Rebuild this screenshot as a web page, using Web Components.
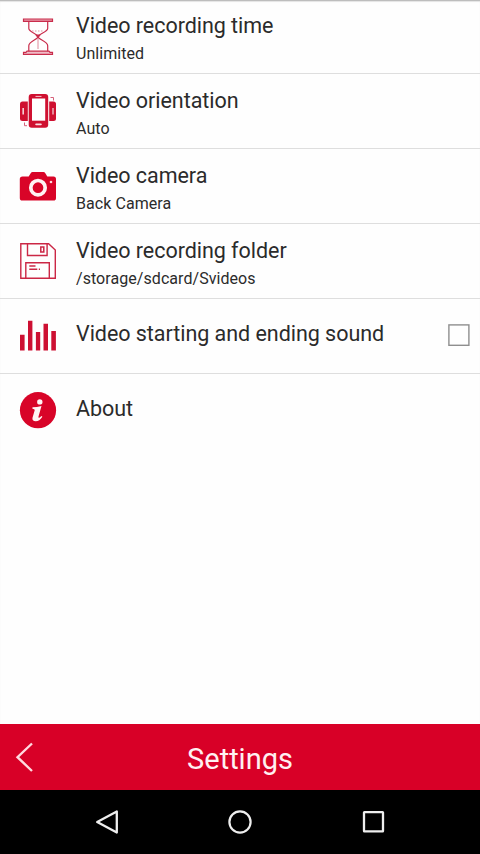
<!DOCTYPE html>
<html lang="en">
<head>
<meta charset="utf-8">
<title>Settings</title>
<style>
html, body { margin: 0; height: 100%; background: #fefefe; }
body { font-family: Roboto, "Liberation Sans", sans-serif; overflow: hidden; }
</style>
</head>
<body>
<settings-screen></settings-screen>
<script>
const ICONS = {
  hourglass: `<g fill="none" stroke="#c92c4b" stroke-width="1.2">
    <path fill="#e79aaa" d="M5.5 3h29v2.4h-29z"/><path fill="#f0bcc7" d="M9 35.2h22l1 1.2h2.5v2h-29v-2H8z"/>
    <path d="M10.8 5.4v7.2c0 3.4 9.2 5.6 9.2 8.1s-9.2 4.8-9.2 9v5.5M29.7 5.4v7.2c0 3.4-9.7 5.6-9.7 8.1s9.7 4.8 9.7 9v5.5"/>
    <path stroke="#e08a9c" stroke-dasharray="1.5 1.5" stroke-width=".9" d="M14 15h12"/><path stroke="#dc8092" stroke-width=".9" d="M20 22v11"/></g>
    <path fill="#c92c4b" d="M17 18.5h6l-3 4z"/>`,
  phones: `<g fill="#cf1030"><rect x="2" y="10.5" width="12" height="19.5" rx="2.5"/><rect x="27" y="10.5" width="11" height="19.5" rx="2.5"/></g>
    <path fill="#fefefe" d="M9.8 8h21.4v24H9.8z"/>
    <path fill="#fefefe" d="M4.5 17h1.3v6.5H4.5zM34.5 17h1v6.5h-1z"/>
    <rect x="10.7" y="3" width="19.5" height="33.7" rx="3" fill="#cf1030"/><path fill="#fefefe" d="M14 7.5h13.2v22.2H14z"/>
    <path stroke="#f7c5ce" stroke-width="1" d="M17.5 5.4h6"/><rect x="17.2" y="32.4" width="6.6" height="1.8" rx=".9" fill="#f9dce1"/>
    <path fill="none" stroke="#d6607a" d="M32.5 6.5h3v3M6.5 31.5v3.2h2.5"/>`,
  camera: `<path fill="#d90428" d="M4.5 10.5h6.2L13 6.8Q13.5 6 14.5 6h11q1 0 1.5.8l2.3 3.7h6.2Q38 10.5 38 13v19q0 2.6-2.6 2.6H4.4Q1.8 34.6 1.8 32V13q0-2.5 2.7-2.5z"/>
    <circle cx="20" cy="21.7" r="7.2" fill="#d90428" stroke="#fff2f3" stroke-width="3.7"/><circle cx="33" cy="16" r="1.3" fill="#ffd9df"/>`,
  floppy: `<g fill="none" stroke="#cb2745" stroke-width="1.4"><path d="M2.8 2.7h27.8l6.7 6.4v28.2H2.8z"/>
    <path d="M9.5 2.7v11.8h19.6V2.7M7.8 37.3V21.7h23.5v15.6"/><path stroke-width="1.5" d="M22.8 5.9h3v5h-3z"/>
    <path stroke-width="1.5" d="M11.3 25h6.2M11.3 28.3h8"/><path d="M20.8 28.3h1.2"/></g>`,
  bars: `<path fill="#cd1032" d="M2 18.8h4.6v15.6H2zM10 4.8h4.4v29.6H10zM17.9 16h4.3v18.4h-4.3zM25.5 7.8h4.5v26.6h-4.5zM33.3 15h4.6v19.4h-4.6z"/>`,
  info: `<circle cx="20" cy="19.2" r="18.1" fill="#d80428"/><circle cx="21.8" cy="10.9" r="2.7" fill="#fff5f5"/>
    <path fill="#fff5f5" d="M14.5 16.2q4.4-.2 9-1.3l-3 10.6q-.3 1.5.6 1.2.9-.4 2.2-1.8l1.1.8q-3 4.5-6.6 4.5-4 0-3.3-3.4l2.2-7.5q.3-1.6-2.3-1.6z"/>`
};

class SettingsIcon extends HTMLElement {
  connectedCallback() {
    this.attachShadow({ mode: 'open' }).innerHTML = `
      <style>:host{display:block;width:40px;height:40px;flex:none}svg{display:block}</style>
      <svg width="40" height="40" viewBox="0 0 40 40">${ICONS[this.getAttribute('name')]}</svg>`;
  }
}
customElements.define('settings-icon', SettingsIcon);

class SettingsRow extends HTMLElement {
  connectedCallback() {
    this.attachShadow({ mode: 'open' }).innerHTML = `
      <style>
        :host{display:flex;box-sizing:border-box;height:75px;padding:17px 10px 0 18px;border-bottom:1px solid #dedede;align-items:flex-start}
        :host(:last-of-type){border-bottom-color:transparent}
        .text{flex:1;margin:-4px 0 0 18px;color:#2b2b2b;white-space:nowrap}
        :host([single]) .text{margin-top:4px}
        .title{font-size:21.5px;line-height:28px;letter-spacing:-.04px}
        .detail{font-size:16px;line-height:20px;margin-top:4px;letter-spacing:.06px}
      </style>
      <settings-icon name="${this.getAttribute('icon')}"></settings-icon>
      <div class="text"><div class="title"><slot></slot></div><div class="detail"><slot name="detail"></slot></div></div>
      <slot name="control"></slot>`;
  }
}
customElements.define('settings-row', SettingsRow);

class CheckBox extends HTMLElement {
  connectedCallback() {
    this.attachShadow({ mode: 'open' }).innerHTML = `
      <style>:host{display:block;width:22px;height:22px;margin-top:8px;flex:none}svg{display:block}</style>
      <svg width="22" height="22" viewBox="0 0 22 22"><rect x=".9" y=".9" width="20" height="20.4" fill="none" stroke="#8e8e8e" stroke-width="1.4"/></svg>`;
  }
}
customElements.define('check-box', CheckBox);

class TitleBar extends HTMLElement {
  connectedCallback() {
    this.attachShadow({ mode: 'open' }).innerHTML = `
      <style>
        :host{display:grid;grid-template-columns:48px 1fr 48px;align-items:center;height:66px;background:#d80027;color:#fff0f1;text-align:center;font-size:29px;line-height:34px}
        svg{display:block}.label{padding-top:3px}
      </style>
      <svg width="48" height="66" viewBox="0 0 48 66"><path d="M32 19.5 17.5 33.2 32 47" fill="none" stroke="#ffd9df" stroke-width="2.4"/></svg>
      <div class="label"><slot></slot></div>`;
  }
}
customElements.define('title-bar', TitleBar);

class NavBar extends HTMLElement {
  connectedCallback() {
    this.attachShadow({ mode: 'open' }).innerHTML = `
      <style>:host{display:flex;justify-content:center;gap:93.5px;align-items:center;height:64px;background:#000}svg{display:block}</style>
      <svg width="40" height="40" viewBox="0 0 40 40"><path d="M10.2 20 29.8 9.5v21z" fill="none" stroke="#eee" stroke-width="2.3" stroke-linejoin="round"/></svg>
      <svg width="40" height="40" viewBox="0 0 40 40"><circle cx="20" cy="20" r="10.6" fill="none" stroke="#eee" stroke-width="2.2"/></svg>
      <svg width="40" height="40" viewBox="0 0 40 40"><rect x="10" y="10.2" width="19" height="19.2" rx=".4" fill="none" stroke="#eee" stroke-width="2.3"/></svg>`;
  }
}
customElements.define('nav-bar', NavBar);

class SettingsScreen extends HTMLElement {
  connectedCallback() {
    this.attachShadow({ mode: 'open' }).innerHTML = `
      <style>
        :host{display:flex;flex-direction:column;height:854px;width:480px;background:#fefefe}
        main{flex:1;box-shadow:inset 0 1px 0 #bdbdbd,inset 0 2px 1px #e4e4e4}
        .first{margin-top:-1px}
      </style>
      <main>
        <settings-row class="first" icon="hourglass">Video recording time<span slot="detail">Unlimited</span></settings-row>
        <settings-row icon="phones">Video orientation<span slot="detail">Auto</span></settings-row>
        <settings-row icon="camera">Video camera<span slot="detail">Back Camera</span></settings-row>
        <settings-row icon="floppy">Video recording folder<span slot="detail">/storage/sdcard/Svideos</span></settings-row>
        <settings-row icon="bars" single>Video starting and ending sound<check-box slot="control"></check-box></settings-row>
        <settings-row icon="info" single>About</settings-row>
      </main>
      <title-bar>Settings</title-bar>
      <nav-bar></nav-bar>`;
  }
}
customElements.define('settings-screen', SettingsScreen);
</script>
</body>
</html>
